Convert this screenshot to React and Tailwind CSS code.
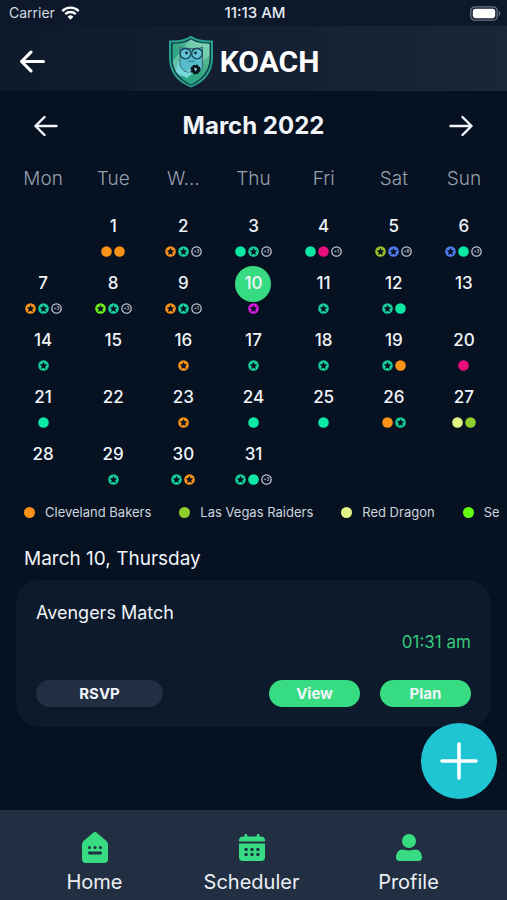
import React from 'react';

const ORANGE = '#fb9318'
const GREEN = '#0de8a4'
const TEAL = '#14d09a'
const PINK = '#ea0f7c'
const BLUE = '#4f7df0'
const LIME = '#8fce2c'

// d = solid dot, s = disc with a star cut out, m = "+n" counter
const d = (color) => ({ type: 'dot', color })
const s = (color) => ({ type: 'star', color })
const m = (count) => ({ type: 'more', count })

const weekDays = ['Mon', 'Tue', 'Wed', 'Thu', 'Fri', 'Sat', 'Sun']

const events = {
  1: [d(ORANGE), d(ORANGE)],
  2: [s(ORANGE), s(TEAL), m(3)],
  3: [d(GREEN), s(TEAL), m(3)],
  4: [d(GREEN), d(PINK), m(1)],
  5: [s('#9bc42c'), s(BLUE), m(8)],
  6: [s(BLUE), d(GREEN), m(3)],
  7: [s(ORANGE), s(TEAL), m(3)],
  8: [s('#72f01c'), s(TEAL), m(3)],
  9: [s(ORANGE), s(TEAL), m(1)],
  10: [s('#d81be0')],
  11: [s(TEAL)],
  12: [s(TEAL), d(GREEN)],
  14: [s(TEAL)],
  16: [s(ORANGE)],
  17: [s(TEAL)],
  18: [s(TEAL)],
  19: [s(TEAL), d(ORANGE)],
  20: [d(PINK)],
  21: [d(GREEN)],
  23: [s(ORANGE)],
  24: [d(GREEN)],
  25: [d(GREEN)],
  26: [d(ORANGE), s(TEAL)],
  27: [d('#e2f584'), d(LIME)],
  29: [s(TEAL)],
  30: [s(TEAL), s(ORANGE)],
  31: [s(TEAL), d(GREEN), m(3)],
}

const weeks = [
  [null, 1, 2, 3, 4, 5, 6],
  [7, 8, 9, 10, 11, 12, 13],
  [14, 15, 16, 17, 18, 19, 20],
  [21, 22, 23, 24, 25, 26, 27],
  [28, 29, 30, 31, null, null, null],
]

const teams = [
  { name: 'Cleveland Bakers', color: ORANGE },
  { name: 'Las Vegas Raiders', color: LIME },
  { name: 'Red Dragon', color: '#e2f584' },
  { name: 'Sea', color: '#66ff11' },
]

function Marker({ item }) {
  if (item.type === 'more') {
    return (
      <svg viewBox="0 0 22 22" className="size-[11px] text-[#c3cad8]">
        <circle cx="11" cy="11" r="9.4" fill="none" stroke="currentColor" strokeWidth="2.4" />
        <text x="11" y="14.5" textAnchor="middle" fontSize="9" fontWeight="600" fill="currentColor">
          +{item.count}
        </text>
      </svg>
    )
  }
  return (
    <svg viewBox="0 0 22 22" className="size-[11px]" style={{ color: item.color }} aria-hidden="true">
      <circle cx="11" cy="11" r="10.6" fill="currentColor" />
      {item.type === 'star' && (
        <path
          d="M11 3.6l2.200 4.900 5.300.6-3.900 3.600 1.100 5.300-4.700-2.700-4.700 2.700 1.100-5.300-3.900-3.600 5.300-.6z"
          fill="#061121"
        />
      )}
    </svg>
  )
}

function Arrow({ className, right, strokeWidth }) {
  return (
    <svg viewBox="0 0 24 24" className={className} fill="none" stroke="currentColor" strokeWidth={strokeWidth} strokeLinecap="round" strokeLinejoin="round" aria-hidden="true">
      {right ? <path d="M1.5 12h21M13.5 3l9 9-9 9" /> : <path d="M22.5 12h-21M10.5 3l-9 9 9 9" />}
    </svg>
  )
}

function StatusBar() {
  return (
    <div className="grid h-[26px] grid-cols-3 items-center bg-[#0d192b] pr-1.5 pl-[9px] text-[15px]">
      <div className="flex items-center gap-1.5 text-[#d5dae3]">
        <span className="text-sm">Carrier</span>
        <svg viewBox="0 0 20 15" className="h-[14px] w-[19px]" fill="none" stroke="#fff" strokeWidth="2.6" aria-hidden="true">
          <path d="M1.2 5.400a12.500 12.500 0 0 1 17.600 0" />
          <path d="M4.400 8.800a8 8 0 0 1 11.200 0" />
          <path d="M10 14.600l-3.100-3.200a4.400 4.400 0 0 1 6.200 0z" fill="#fff" stroke="none" />
        </svg>
      </div>
      <span className="text-center font-medium text-[#e6eaf1]">11:13 AM</span>
      <svg viewBox="0 0 31 15" className="h-[15px] w-[31px] justify-self-end" aria-hidden="true">
        <rect x=".8" y=".8" width="26.4" height="13.4" rx="4" fill="none" stroke="#6b7482" strokeWidth="1.3" />
        <rect x="2.8" y="2.8" width="22.4" height="9.4" rx="2.4" fill="#fff" />
        <path d="M28.800 5c2 .8 2 4.200 0 5z" fill="#6b7482" />
      </svg>
    </div>
  )
}

function Shield() {
  return (
    <svg viewBox="0 0 46 53" className="h-[53px] w-[46px]" aria-hidden="true">
      <defs>
        <linearGradient id="shield" x1="0" y1="1" x2="1" y2="0">
          <stop offset="0" stopColor="#1fa486" />
          <stop offset=".5" stopColor="#35a785" />
          <stop offset="1" stopColor="#8fd6ab" />
        </linearGradient>
        <clipPath id="inner">
          <path d="M23 4.500c5 3.200 11 4.400 18.500 4.300v14.700C41.500 35 34 44.500 23 49.500 12 44.500 4.500 35 4.500 23.500V8.800C12 8.900 18 7.700 23 4.500z" />
        </clipPath>
      </defs>
      <path d="M23 .8c6 3.800 13 5 22 4.700v18C45 37 36.500 47.500 23 52.500 9.500 47.500 1 37 1 23.500v-18C10 5.800 17 4.600 23 .8z" fill="#28a08c" />
      <path d="M23 3.200c5.500 3.300 12 4.500 20 4.400v15.900C43 35.500 35.500 45.500 23 50.500 10.500 45.500 3 35.500 3 23.500V7.600C11 7.700 17.500 6.500 23 3.200z" fill="#0b3946" />
      <g clipPath="url(#inner)">
        <path d="M0 0h46v53H0z" fill="url(#shield)" />
        <path d="M26 0h20v18L8 44 0 32z" fill="#8bdcc0" opacity=".55" />
        <path d="M12 24l20 8-13 11-12-6z" fill="#74dadb" />
      </g>
      <path d="M12 12l3 1.500h16l3.500-1.500v19.500c0 3-4 5.500-8.500 5.500h-6c-4 0-8-4-8-8z" fill="#55bdc9" stroke="#466773" strokeWidth="1" />
      <circle cx="17.5" cy="18.5" r="5.3" fill="#61c3d4" stroke="#174857" strokeWidth="1.3" />
      <circle cx="29" cy="18.5" r="5.3" fill="#61c3d4" stroke="#174857" strokeWidth="1.3" />
      <path d="M12.500 15.500q5-3.500 10 0M24 15.500q5-3.500 10 0" stroke="#174857" strokeWidth="1.2" fill="none" />
      <circle cx="18.5" cy="18" r="1.4" fill="#0b2b3a" />
      <circle cx="27.5" cy="18" r="1.4" fill="#0b2b3a" />
      <path d="M20 26q3.500 1.500 7 0" stroke="#2e7d89" fill="none" />
      <circle cx="27.5" cy="34.5" r="4.2" fill="#081018" stroke="#081018" strokeWidth="1.5" strokeDasharray="2 1.3" />
      <path d="M26 32.500l2.500.4.500 2-2 1.400zM21 34l-2 2 3 2z" fill="#8ecfd0" />
    </svg>
  )
}

function Header() {
  return (
    <header className="relative flex h-[65px] items-center justify-center bg-linear-to-r from-[#0d1a2c] via-[#142031] to-[#1b2636] pt-1.5">
      <button aria-label="Back" className="absolute left-5 text-white">
        <Arrow className="size-[25px]" strokeWidth={3} />
      </button>
      <div className="mr-5 flex items-center gap-1.5">
        <Shield />
        <span className="font-['Roboto',sans-serif] text-[30px] leading-none font-bold text-white">KOACH</span>
      </div>
    </header>
  )
}

function Calendar() {
  return (
    <section>
      <div className="flex h-[70px] items-center justify-between px-[34px]">
        <button aria-label="Previous month">
          <Arrow className="size-6" strokeWidth={2.4} />
        </button>
        <h1 className="text-2xl font-bold">March 2022</h1>
        <button aria-label="Next month">
          <Arrow className="size-6" strokeWidth={2.4} right />
        </button>
      </div>

      <div className="px-2">
        <table className="w-full table-fixed border-collapse">
          <thead>
            <tr className="h-12">
              {weekDays.map((day) => (
                <th key={day} abbr={day} className="p-0 pb-3 text-[19px] font-light text-[#98a0ae]">
                  {day === 'Wed' ? 'W...' : day}
                </th>
              ))}
            </tr>
          </thead>
          <tbody>
            {weeks.map((week, i) => (
              <tr key={i} className="h-[57px]">
                {week.map((day, j) => (
                  <td key={j} className="p-0 align-top">
                    {day && (
                      <div className="flex flex-col items-center gap-px">
                        <button
                          className={
                            day === 10
                              ? 'size-9 rounded-full bg-[#37dc82] text-[17px] font-medium'
                              : 'size-9 rounded-full text-[17px] font-medium'
                          }
                        >
                          {day}
                        </button>
                        <div className="flex gap-0.5">
                          {events[day]?.map((item, k) => (
                            <Marker key={k} item={item} />
                          ))}
                        </div>
                      </div>
                    )}
                  </td>
                ))}
              </tr>
            ))}
          </tbody>
        </table>
      </div>

      {/* Team legend, scrolls sideways */}
      <ul className="mr-2 ml-6 flex h-[37px] items-center gap-7 overflow-x-auto [scrollbar-width:none]">
        {teams.map((team) => (
          <li key={team.name} className="flex shrink-0 items-center gap-2.5 text-[13px] text-[#cfd5df]">
            <span className="size-[11px] rounded-full" style={{ backgroundColor: team.color }} />
            {team.name}
          </li>
        ))}
      </ul>
    </section>
  )
}

function EventCard() {
  return (
    <article className="mx-4 mt-[7px] rounded-[24px] bg-[#0d1a2c] px-5 pt-[21px] pb-5">
      <h3 className="text-lg leading-6">Avengers Match</h3>
      <p className="mt-[3px] text-right text-[17px] leading-7 text-[#37c97b]">01:31 am</p>
      <div className="mt-6 flex items-center gap-5 text-[15px] leading-[27px] font-bold">
        <button className="mr-auto h-[27px] w-[127px] rounded-full bg-[#222f43]">RSVP</button>
        <button className="h-[27px] w-[91px] rounded-full bg-[#37dc82]">View</button>
        <button className="h-[27px] w-[91px] rounded-full bg-[#37dc82]">Plan</button>
      </div>
    </article>
  )
}

function HomeIcon() {
  return (
    <svg viewBox="0 0 26 31" className="h-[31px] w-[26px]" aria-hidden="true">
      <path d="M10.600 1.200a3.500 3.500 0 0 1 4.800 0l9 7.800A4.500 4.500 0 0 1 26 12.400V27a4 4 0 0 1-4 4H4a4 4 0 0 1-4-4V12.400A4.500 4.500 0 0 1 1.600 9z" fill="#37dc82" />
      <g fill="#222f43">
        <circle cx="7.5" cy="15.5" r="1.5" />
        <circle cx="13" cy="15.5" r="1.5" />
        <circle cx="18.5" cy="15.5" r="1.5" />
        <rect x="6" y="19.6" width="14" height="2.8" rx="1.3" />
      </g>
    </svg>
  )
}

function CalendarIcon() {
  return (
    <svg viewBox="0 0 26 27" className="h-[27px] w-[26px]" aria-hidden="true">
      <path d="M0 7.500V6.500a4 4 0 0 1 4-4h1.500V1.300a1.300 1.300 0 0 1 2.800 0v1.200h9.400V1.300a1.300 1.300 0 0 1 2.800 0v1.200H22a4 4 0 0 1 4 4v1z" fill="#37dc82" />
      <path d="M0 9.600h26V23a4 4 0 0 1-4 4H4a4 4 0 0 1-4-4z" fill="#37dc82" />
      <g fill="#222f43">
        <rect x="5.5" y="14" width="3.2" height="3" rx=".9" />
        <rect x="11.4" y="14" width="3.2" height="3" rx=".9" />
        <rect x="17.3" y="14" width="3.2" height="3" rx=".9" />
        <rect x="5.5" y="19" width="3.2" height="3" rx=".9" />
        <rect x="11.4" y="19" width="3.2" height="3" rx=".9" />
        <rect x="17.3" y="19" width="3.2" height="3" rx=".9" />
      </g>
    </svg>
  )
}

function ProfileIcon() {
  return (
    <svg viewBox="0 0 26 27" className="h-[27px] w-[26px]" fill="#37dc82" aria-hidden="true">
      <circle cx="13" cy="7" r="7" />
      <path d="M0 23.500c0-5 3-8 6.500-8 1.500 0 3.500 1 6.500 1s5-1 6.500-1c3.500 0 6.500 3 6.500 8 0 2.300-1.200 3.500-3.500 3.500h-19C1.200 27 0 25.800 0 23.500z" />
    </svg>
  )
}

const tabs = [
  { label: 'Home', Icon: HomeIcon },
  { label: 'Scheduler', Icon: CalendarIcon },
  { label: 'Profile', Icon: ProfileIcon },
]

function TabBar() {
  return (
    <nav className="grid h-[90px] grid-cols-3 bg-[#222f43] pr-5 pl-4">
      {tabs.map(({ label, Icon }) => (
        <a key={label} href="#" className="flex flex-col items-center pt-[22px] text-xl leading-6 text-[#eceff4]">
          <span className="flex h-[31px] items-center">
            <Icon />
          </span>
          <span className="mt-[7px]">{label}</span>
        </a>
      ))}
    </nav>
  )
}

function App() {
  return (
    <div className="flex min-h-screen flex-col bg-[#061121] font-['Inter',sans-serif] text-[#f1f4f8]">
      <StatusBar />
      <Header />
      <main className="relative flex-1">
        <Calendar />
        <h2 className="mx-6 mt-[14px] text-[19px] leading-7">March 10, Thursday</h2>
        <EventCard />
        <button
          aria-label="Add event"
          className="absolute right-2.5 bottom-[11px] flex size-[76px] items-center justify-center rounded-full bg-[#1fc5d3]"
        >
          <svg viewBox="0 0 38 38" className="size-[38px]" stroke="#fff" strokeWidth="3.6" strokeLinecap="round" aria-hidden="true">
            <path d="M19 2v34M2 19h34" />
          </svg>
        </button>
      </main>
      <TabBar />
    </div>
  );
}

export default App;
